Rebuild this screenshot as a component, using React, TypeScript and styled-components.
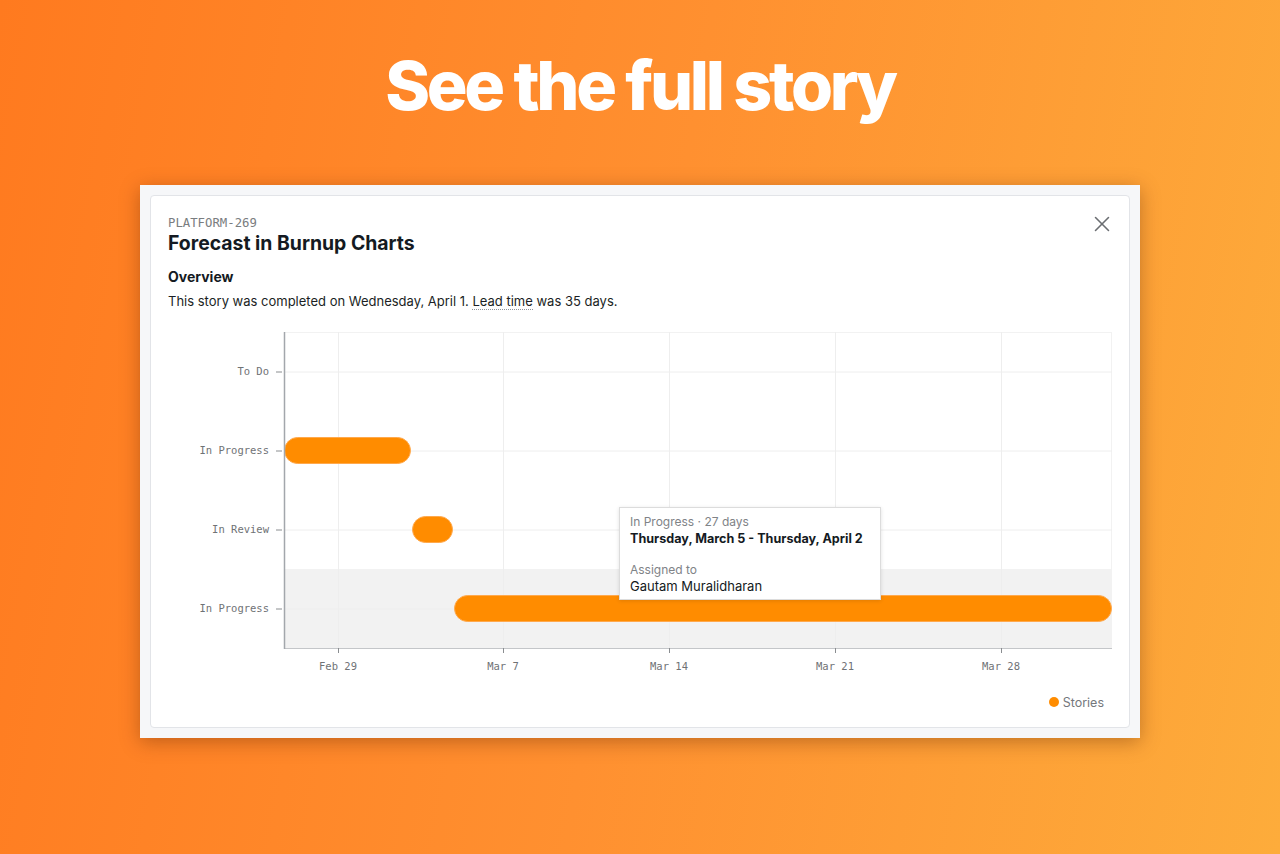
import styled, { createGlobalStyle } from 'styled-components';
import { X } from 'lucide-react';

const GlobalStyle = createGlobalStyle`
  html, body {
    margin: 0;
    padding: 0;
  }
  body {
    font-family: Inter, 'Noto Sans', sans-serif;
  }
`;

const Page = styled.div({
  width: '1280px',
  height: '854px',
  background: 'linear-gradient(100deg, #ff7a1f 0%, #ff9030 50%, #fdac3b 100%)',
  display: 'flex',
  flexDirection: 'column',
  alignItems: 'center',
  overflow: 'hidden'
});

const Headline = styled.h1({
  margin: 0,
  paddingTop: '48px',
  height: '185px',
  boxSizing: 'border-box',
  fontFamily: 'Inter, sans-serif',
  fontWeight: 800,
  fontSize: '68px',
  lineHeight: '74px',
  letterSpacing: '-3.3px',
  color: '#ffffff'
});

const Frame = styled.div({
  width: '1000px',
  padding: '10px',
  boxSizing: 'border-box',
  background: '#f6f7f9',
  boxShadow: '0 4px 18px rgba(80, 30, 0, 0.35)'
});

const Card = styled.div({
  position: 'relative',
  background: '#ffffff',
  border: '1px solid #e2e4e8',
  borderRadius: '4px',
  padding: '19px 17px 17px 17px'
});

const CloseButton = styled.button({
  position: 'absolute',
  top: '15px',
  right: '14px',
  width: '26px',
  height: '26px',
  padding: 0,
  border: 'none',
  background: 'transparent',
  color: '#6b6e72',
  display: 'flex'
});

const mono = "'DejaVu Sans Mono', 'Liberation Mono', monospace";

const StoryKey = styled.div({
  fontFamily: mono,
  fontSize: '12.3px',
  lineHeight: '16px',
  color: '#7a7d80'
});

const StoryTitle = styled.h2({
  margin: 0,
  fontSize: '19.4px',
  lineHeight: '24px',
  fontWeight: 700,
  color: '#141a22'
});

const SectionTitle = styled.h3({
  margin: '12px 0 0',
  fontSize: '14px',
  lineHeight: '20px',
  fontWeight: 700,
  color: '#141a22'
});

const Summary = styled.p({
  margin: '4px 0 0',
  fontSize: '13px',
  lineHeight: '20px',
  color: '#1b1f24'
});

const Dotted = styled.span({
  borderBottom: '1px dotted #8f959c'
});

const ChartWrap = styled.div({
  position: 'relative',
  marginTop: '11px',
  height: '350px'
});

const Tooltip = styled.div({
  position: 'absolute',
  left: '451px',
  top: '185px',
  width: '262px',
  height: '93px',
  boxSizing: 'border-box',
  padding: '5px 10px',
  background: '#ffffff',
  border: '1px solid #dcdcdc',
  boxShadow: '0 1px 4px rgba(0, 0, 0, 0.12)',
  display: 'flex',
  flexDirection: 'column',
  gap: '14px'
});

const TipGroup = styled.div({
  display: 'flex',
  flexDirection: 'column'
});

const TipLabel = styled.span({
  fontSize: '12px',
  lineHeight: '17px',
  color: '#808387'
});

const TipValue = styled.span<{ $bold?: boolean }>`
  font-size: ${(p) => (p.$bold ? '12.6px' : '13px')};
  line-height: 17px;
  white-space: nowrap;
  color: #141a22;
  font-weight: ${(p) => (p.$bold ? 700 : 400)};
`;

const Legend = styled.div({
  marginTop: '22px',
  marginRight: '8px',
  display: 'flex',
  justifyContent: 'flex-end',
  alignItems: 'center',
  gap: '4px',
  height: '16px'
});

const LegendDot = styled.span({
  width: '10px',
  height: '10px',
  borderRadius: '50%',
  background: '#ff8c00'
});

const LegendText = styled.span({
  fontSize: '12.5px',
  color: '#75787c'
});

const plot = { left: 116, right: 944, top: 10, bottom: 326 };
const rowHeight = 79;
const rows = ['To Do', 'In Progress', 'In Review', 'In Progress'];
const ticks = [
  { x: 170, label: 'Feb 29' },
  { x: 335, label: 'Mar 7' },
  { x: 501, label: 'Mar 14' },
  { x: 667, label: 'Mar 21' },
  { x: 833, label: 'Mar 28' }
];
const bars = [
  { row: 1, from: 116, to: 243 },
  { row: 2, from: 244, to: 285 },
  { row: 3, from: 286, to: 944 }
];

function TimelineChart() {
  const rowY = (i: number) => plot.top + rowHeight * i + rowHeight / 2;
  return (
    <svg width="944" height="350" viewBox="0 0 944 350">
      <rect x={plot.left} y={plot.top + rowHeight * 3} width={plot.right - plot.left} height={rowHeight} fill="#f2f2f2" />
      <line x1={plot.left} x2={plot.right} y1={plot.top + 0.5} y2={plot.top + 0.5} stroke="#f2f2f2" />
      <line x1={plot.right - 0.5} x2={plot.right - 0.5} y1={plot.top} y2={plot.bottom} stroke="#f2f2f2" />
      {rows.map((_, i) => (
        <line key={i} x1={plot.left} x2={plot.right} y1={rowY(i) + 0.5} y2={rowY(i) + 0.5} stroke="#eeeeee" />
      ))}
      {ticks.map((t) => (
        <line key={t.label} x1={t.x + 0.5} x2={t.x + 0.5} y1={plot.top} y2={plot.bottom} stroke="#eeeeee" />
      ))}
      {bars.map((b, i) => (
        <rect
          key={i}
          x={b.from + 0.5}
          y={rowY(b.row) - 13}
          width={b.to - b.from - 1}
          height={26}
          rx={13}
          fill="#ff8c00"
          stroke="#ffa94d"
          strokeWidth={1}
        />
      ))}
      <line x1={plot.left} x2={plot.right} y1={plot.bottom + 0.5} y2={plot.bottom + 0.5} stroke="#c4c6c9" />
      <line x1={plot.left + 0.5} x2={plot.left + 0.5} y1={plot.top} y2={plot.bottom + 1} stroke="#a3a7ac" strokeWidth={1.5} />
      {rows.map((label, i) => (
        <g key={i}>
          <line x1={108} x2={114} y1={rowY(i) + 0.5} y2={rowY(i) + 0.5} stroke="#8a8d90" />
          <text x={101} y={rowY(i)} textAnchor="end" dominantBaseline="middle" fontFamily={mono} fontSize="10.5" fill="#6f7275">
            {label}
          </text>
        </g>
      ))}
      {ticks.map((t) => (
        <g key={t.label}>
          <line x1={t.x + 0.5} x2={t.x + 0.5} y1={plot.bottom} y2={plot.bottom + 5} stroke="#8a8d90" />
          <text x={t.x} y={345} textAnchor="middle" dominantBaseline="middle" fontFamily={mono} fontSize="10.5" fill="#6f7275">
            {t.label}
          </text>
        </g>
      ))}
    </svg>
  );
}

export default function App() {
  return (
    <>
      <GlobalStyle />
      <Page>
        <Headline>See the full story</Headline>
        <Frame>
          <Card>
            <CloseButton aria-label="Close">
              <X size={26} strokeWidth={1.4} />
            </CloseButton>
            <StoryKey>PLATFORM-269</StoryKey>
            <StoryTitle>Forecast in Burnup Charts</StoryTitle>
            <SectionTitle>Overview</SectionTitle>
            <Summary>
              This story was completed on Wednesday, April 1. <Dotted>Lead time</Dotted> was 35 days.
            </Summary>
            <ChartWrap>
              <TimelineChart />
              <Tooltip>
                <TipGroup>
                  <TipLabel>In Progress · 27 days</TipLabel>
                  <TipValue $bold>Thursday, March 5 - Thursday, April 2</TipValue>
                </TipGroup>
                <TipGroup>
                  <TipLabel>Assigned to</TipLabel>
                  <TipValue>Gautam Muralidharan</TipValue>
                </TipGroup>
              </Tooltip>
            </ChartWrap>
            <Legend>
              <LegendDot />
              <LegendText>Stories</LegendText>
            </Legend>
          </Card>
        </Frame>
      </Page>
    </>
  );
}
